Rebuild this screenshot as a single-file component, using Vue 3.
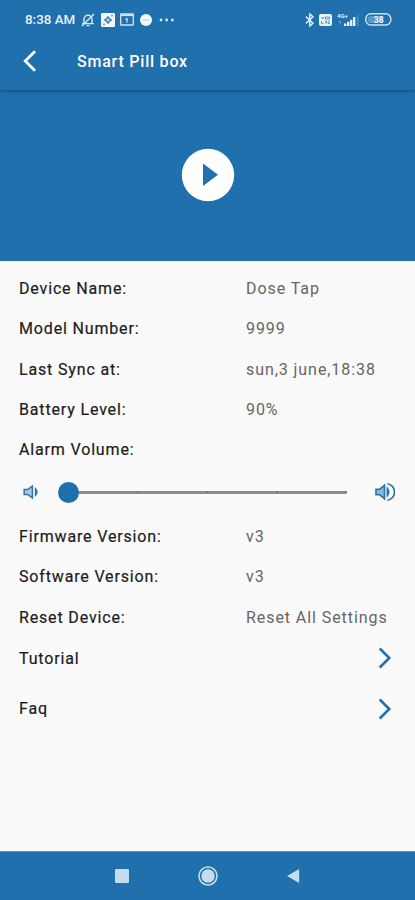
<script setup>
const details = [
  { label: 'Device Name:', value: 'Dose Tap' },
  { label: 'Model Number:', value: '9999' },
  { label: 'Last Sync at:', value: 'sun,3 june,18:38' },
  { label: 'Battery Level:', value: '90%' },
  { label: 'Alarm Volume:', value: '' },
]
const versions = [
  { label: 'Firmware Version:', value: 'v3' },
  { label: 'Software Version:', value: 'v3' },
  { label: 'Reset Device:', value: 'Reset All Settings' },
]
const links = ['Tutorial', 'Faq']
</script>

<template>
  <div class="screen">
    <header class="top">
      <div class="status">
        <div class="status-left">
          <span class="time">8:38 AM</span>
          <svg class="mute" width="14" height="14" viewBox="0 0 14 14" fill="none" stroke="#d9e9f5" stroke-width="1.4">
            <path d="M3 10.2V6.2a4 4 0 0 1 8 0v4M1.2 10.6h11.6M5.5 12.6h3M1 13 13 1" />
          </svg>
          <svg class="app" width="14" height="14" viewBox="0 0 14 14">
            <rect width="14" height="14" rx="1" fill="#f4f9fd" />
            <path d="M7 2.8 8.8 5 11.4 7 8.8 9 7 11.2 5.2 9 2.6 7 5.2 5z" fill="#3b83b9" />
            <circle cx="7" cy="7" r="1.6" fill="#b5d2e8" />
            <circle cx="3" cy="11.2" r="1" fill="#5f9cc9" />
            <circle cx="11" cy="2.8" r="1" fill="#5f9cc9" />
          </svg>
          <svg class="window" width="14" height="13" viewBox="0 0 14 13" fill="none" stroke="#d2e5f3" stroke-width="1.3">
            <rect x=".7" y="1" width="12.6" height="11" rx=".5" />
            <path d="M1 2.2h12" stroke-width="1.8" />
            <path d="M7 5v4.4M5.6 6.4 7 5.2" />
          </svg>
          <svg class="chat" width="12" height="12" viewBox="0 0 12 12">
            <circle cx="6" cy="6" r="6" fill="#f4f9fd" />
            <path d="M2.8 6.2q1.2-1.5 2.2 0t2 0 2.2 0" fill="none" stroke="#a9c9e2" />
          </svg>
          <svg class="dots" width="16" height="4" viewBox="0 0 16 4" fill="#d9e9f5">
            <circle cx="2" cy="2" r="1.4" /><circle cx="7.7" cy="2" r="1.4" /><circle cx="13.4" cy="2" r="1.4" />
          </svg>
        </div>
        <div class="status-right">
          <svg width="10" height="14" viewBox="0 0 10 14" fill="none" stroke="#dcebf6" stroke-width="1.5">
            <path d="m1 3.6 7 6.6-3.2 2.8V1L8 3.8 1 10.4" />
          </svg>
          <svg class="volte" width="13" height="12" viewBox="0 0 13 12">
            <rect width="13" height="12" rx="2" fill="#e8f2f9" />
            <path d="M2.5 3 3.8 5 5 3M6.5 3h4v2h-4zM2.5 7v2.5h2M6 7.3h2M7 7v2.8M11 7.3H9v2.2h2" fill="none" stroke="#4d8ebe" stroke-width=".9" />
          </svg>
          <svg class="signal" width="22" height="14" viewBox="0 0 22 14" fill="#e4f0f8">
            <text x="0" y="5" class="net">4G+</text>
            <path d="M7 10.5h2.4V13H7zM10 8.8h2.4V13H10zM13 6.8h2.4V13H13zM16 4h2.4v9H16z" />
            <path d="M20 2h1.5v11H20zM1 8h4l-2 4z" opacity=".25" />
          </svg>
          <svg class="battery" width="27" height="13" viewBox="0 0 27 13">
            <rect x=".8" y=".8" width="25" height="11.2" rx="5" fill="none" stroke="#cce1f0" stroke-width="1.4" />
            <path d="M6 3h12v7H6a3 3 0 0 1 0-7" fill="#bcd6e9" opacity=".4" />
            <text x="8.8" y="9.5" class="charge">38</text>
          </svg>
        </div>
      </div>
      <div class="appbar">
        <svg width="14" height="24" viewBox="0 0 14 24" fill="none" stroke="#fff" stroke-width="2.8">
          <path d="M12 2.2 2.2 12 12 21.8" />
        </svg>
        <h1>Smart Pill box</h1>
      </div>
    </header>

    <section class="video">
      <svg width="54" height="54" viewBox="0 0 54 54">
        <circle cx="27" cy="27" r="26.2" fill="#fff" />
        <path d="M22 15.5v22.6l15-11.3z" fill="#1f70ac" />
      </svg>
    </section>

    <main>
      <div v-for="row in details" :key="row.label" class="row">
        <span class="label">{{ row.label }}</span><span class="value">{{ row.value }}</span>
      </div>

      <div class="slider">
        <svg class="low" width="16" height="16" viewBox="0 0 16 16" fill="none" stroke="#2c75ac" stroke-width="1.5">
          <path d="M1.2 5.5h3.6L9.4 2v12l-4.6-3.5H1.2z" fill="#a9cae2" />
          <path d="M12.6 5q2.6 3 0 6z" fill="#2c75ac" />
        </svg>
        <div class="track">
          <span class="thumb"></span>
          <i v-for="n in 4" :key="n" class="tick"></i>
        </div>
        <svg class="high" width="20" height="20" viewBox="0 0 20 20" fill="none" stroke="#2572aa" stroke-width="1.6">
          <path d="M1 7.2h3.8l4.7-4v13.6l-4.7-4H1z" fill="#8db9d8" />
          <path d="M12.4 6.5q2.6 3.5 0 7zM12.4 1.7a8.4 8.4 0 0 1 0 16.6" />
        </svg>
      </div>

      <div v-for="row in versions" :key="row.label" class="row">
        <span class="label">{{ row.label }}</span><span class="value">{{ row.value }}</span>
      </div>

      <div v-for="link in links" :key="link" class="link">
        <span class="label">{{ link }}</span>
        <svg width="14" height="22" viewBox="0 0 14 22" fill="none" stroke="#1f70ac" stroke-width="2.5">
          <path d="m1.7 1.5 9.6 9.5-9.6 9.5" />
        </svg>
      </div>
    </main>

    <nav>
      <svg width="14" height="14" viewBox="0 0 14 14"><rect width="14" height="14" rx="1" fill="#c5dced" /></svg>
      <svg width="20" height="20" viewBox="0 0 20 20">
        <circle cx="10" cy="10" r="9" fill="none" stroke="#c5dced" stroke-width="1.6" />
        <circle cx="10" cy="10" r="6.7" fill="#c5dced" />
      </svg>
      <svg width="14" height="15" viewBox="0 0 14 15"><path d="M12.2 0v14L0 7z" fill="#c5dced" /></svg>
    </nav>
  </div>
</template>

<style>
body {
  background: #fafafa;
}
</style>

<style scoped>
.screen {
  display: flex;
  flex-direction: column;
  height: 900px;
  overflow: hidden;
  background: #fafafa;
  font-family: Roboto, sans-serif;
}
svg {
  display: block;
  flex: none;
}
.top {
  box-sizing: border-box;
  height: 90px;
  background: #1f70ac;
  box-shadow: 0 1px 3px rgba(0, 20, 60, 0.45);
  z-index: 1;
}
.status {
  display: flex;
  justify-content: space-between;
  height: 39px;
  padding: 0 23px 0 25px;
}
.status-left,
.status-right {
  display: flex;
  align-items: center;
}
.time {
  width: 56px;
  color: #e6f1f9;
  font-size: 13.4px;
  font-weight: 500;
  white-space: nowrap;
}
.app {
  margin-left: 6px;
}
.window {
  margin-left: 5px;
}
.chat {
  margin-left: 6px;
}
.dots {
  margin-left: 7px;
}
.volte {
  margin-left: 4px;
}
.signal {
  margin-left: 5px;
}
.battery {
  margin-left: 6px;
}
.net {
  font-size: 6px;
  font-weight: 700;
}
.charge {
  fill: #eef6fb;
  font-size: 8.5px;
  font-weight: 700;
}
.appbar {
  display: flex;
  align-items: center;
  gap: 40px;
  height: 44px;
  padding-left: 23px;
}
h1 {
  margin: 0;
  padding-top: 1px;
  color: #fff;
  font-size: 16px;
  font-weight: 500;
  letter-spacing: 0.78px;
}
.video {
  display: flex;
  justify-content: center;
  height: 170.5px;
  box-sizing: border-box;
  padding-top: 58px;
  padding-left: 1px;
  background: #1f70ac;
}
.video svg {
  margin-top: 0.4px;
}
main {
  flex: 1;
  padding: 8px 0 0 19px;
}
.row {
  display: flex;
  align-items: center;
  height: 40.3px;
  font-size: 16px;
  letter-spacing: 0.93px;
}
.label {
  width: 227px;
  color: #1c1c1c;
  font-size: 16px;
  letter-spacing: 0.84px;
  -webkit-text-stroke: 0.2px #1c1c1c;
}
.value {
  color: #666;
}
.slider {
  display: flex;
  align-items: center;
  height: 46px;
  margin-top: -0.5px;
  margin-bottom: 1px;
  padding: 0 20px 0 4px;
}
.track {
  display: flex;
  align-items: center;
  justify-content: space-between;
  width: 279px;
  height: 3px;
  margin-left: 29px;
  border-radius: 2px;
  background: #8c8f91;
}
.thumb {
  width: 21px;
  height: 21px;
  margin-right: -10px;
  margin-left: -10px;
  border-radius: 50%;
  background: #1f70ac;
}
.tick {
  width: 2px;
  height: 2px;
  border-radius: 1px;
  background: #66747f;
}
.high {
  margin-left: auto;
}
.link {
  display: flex;
  align-items: center;
  justify-content: space-between;
  height: 50.5px;
  padding-right: 23px;
}
.link:nth-last-child(2) {
  margin-top: -4.5px;
}
nav {
  display: grid;
  grid-template-columns: 14px 20px 14px;
  justify-content: center;
  column-gap: 69px;
  align-items: center;
  box-sizing: border-box;
  height: 49px;
  border-top: 1px solid #a9788b;
  background: #1f70ac;
}
</style>
